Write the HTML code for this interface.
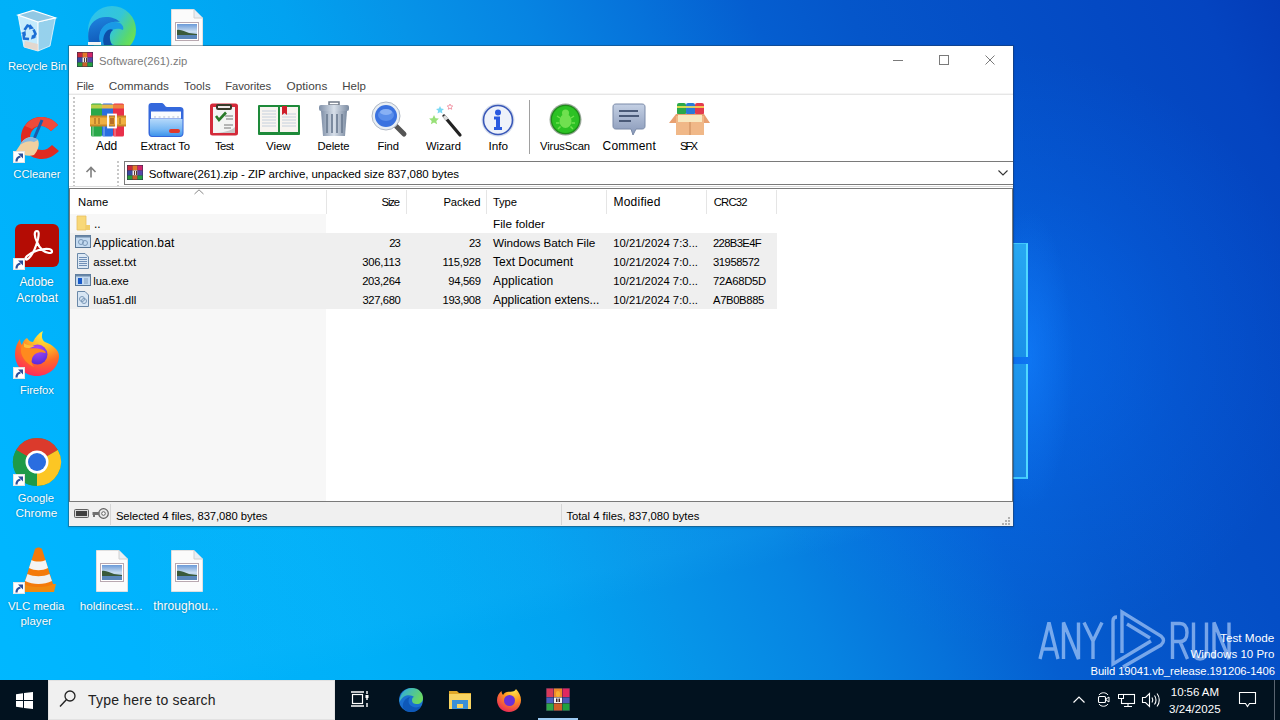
<!DOCTYPE html><html><head><meta charset="utf-8"><style>
*{margin:0;padding:0;box-sizing:border-box}
html,body{width:1280px;height:720px;overflow:hidden}
body{position:relative;font-family:"Liberation Sans",sans-serif;background:#0a6fd8}
.t{position:absolute;white-space:nowrap;font-family:"Liberation Sans",sans-serif}
.a{position:absolute}
svg{position:absolute;overflow:visible}
</style></head><body><div class="a" style="left:0;top:0;width:1280px;height:720px;background:linear-gradient(65deg,#00b8ff 0%,#00b4ff 10%,#00b2fa 17%,#00b0f8 24%,#00aaf4 31%,#02a2f0 38%,#0694e8 45%,#0684e2 53%,#0672da 60%,#055ed0 67%,#0556ca 73%,#044ec6 82%,#0444c0 95%,#043cb8 100%)"></div><div class="a" style="left:0;top:0;width:1280px;height:720px;background:radial-gradient(ellipse 300px 300px at 1015px 350px,rgba(10,120,255,0.5),rgba(10,120,255,0.18) 55%,rgba(10,120,255,0) 100%)"></div><div class="a" style="left:0;top:0;width:1280px;height:720px;background:radial-gradient(ellipse 45px 150px at 1028px 360px,rgba(20,130,255,0.55),rgba(20,130,255,0) 100%)"></div><div class="a" style="left:150px;top:400px;width:720px;height:300px;background:linear-gradient(166.6deg,rgba(40,190,255,0.11) 0%,rgba(40,190,255,0.11) 59%,rgba(40,190,255,0) 66%)"></div><div class="a" style="left:1013px;top:243px;width:15px;height:114px;background:linear-gradient(#28a8f2,#1a90e8);border-right:2px solid #50d8ff;border-top:1px solid #40c8fc"></div><div class="a" style="left:1013px;top:364px;width:15px;height:115px;background:linear-gradient(#1e98ee,#1a86e4);border-right:2px solid #50d8ff;border-bottom:2px solid #40c8fc"></div><svg style="left:0px;top:0px" width="70" height="60" viewBox="0 0 70 60" ><path d="M18 15 L38 22 L38 51 L24 47 Z" fill="rgba(240,248,252,0.82)" stroke="rgba(255,255,255,0.95)" stroke-width="0.8"/><path d="M38 22 L55.5 17.8 L50 46 L38 51 Z" fill="rgba(200,220,232,0.75)" stroke="rgba(255,255,255,0.9)" stroke-width="0.8"/><path d="M18 15 L33 10.5 L55.5 17.8 L38 22 Z" fill="rgba(170,205,225,0.85)" stroke="rgba(255,255,255,1)" stroke-width="1.2"/><path d="M25 41 L38 44 L38 51 L24 47Z" fill="rgba(250,200,170,0.55)"/><g fill="none" stroke="#1c6ed4" stroke-width="2.6"><path d="M24.5 30 L27.5 25.5 L31 27"/><path d="M33.5 29.5 L35.5 34 L33 38"/><path d="M29 39 L24 38.5 L23.5 34"/></g><g fill="#1c6ed4"><path d="M30 24 L34 28.5 L29 29.5Z"/><path d="M36.5 37 L31 39.5 L32 35Z"/><path d="M21 33 L25.5 31 L26 36Z"/></g></svg><svg style="left:88px;top:6px" width="49" height="39" viewBox="0 0 49 39" ><defs><linearGradient id="edg1" x1="0" y1="0.2" x2="1" y2="0.8"><stop offset="0" stop-color="#2ec2ec"/><stop offset="0.5" stop-color="#34c6d8"/><stop offset="0.78" stop-color="#58d870"/><stop offset="1" stop-color="#78e640"/></linearGradient><linearGradient id="edg2" x1="0" y1="0" x2="0.3" y2="1"><stop offset="0" stop-color="#1e86e0"/><stop offset="1" stop-color="#1058b8"/></linearGradient></defs><circle cx="24" cy="24" r="24" fill="url(#edg1)"/><path d="M0.3 27 C1 17 9 11 18 11 C24 11 29 13 32 16 C26 15 18 17 14 23 C11 28 11 34 13 39 L1.5 39 C0.5 35 0 31 0.3 27Z" fill="url(#edg2)"/><path d="M13 39 C10 32 11 25 16 20 C20 16 27 15 32 17 C35 19 36 22 35 24 C31 22 25 22 22 26 C19 30 20 36 26 39Z" fill="#1a9ae6"/><path d="M16 39 C14 33 16 27 20 24 C22 23 24 23 25 24 C21 27 21 33 24 39Z" fill="#0d4fa8"/><rect x="0" y="36" width="13" height="3" fill="#f4f4f4"/></svg><svg style="left:171px;top:9px" width="32" height="42" viewBox="0 0 32 42" ><path d="M0.5 0.5H23L31.5 9V41.5H0.5Z" fill="#fbfbfb" stroke="#e0e0e0"/><path d="M23 0.5V9H31.5" fill="#e8eef4" stroke="#d0d0d0"/><rect x="4.5" y="13.5" width="23" height="18" fill="#fff" stroke="#b8a8b0"/><defs><linearGradient id="skyg" x1="0" y1="0" x2="0" y2="1"><stop offset="0" stop-color="#6a9ad8"/><stop offset="0.5" stop-color="#c8dcf0"/><stop offset="1" stop-color="#90b8d8"/></linearGradient></defs><rect x="6" y="15" width="20" height="15" fill="url(#skyg)"/><path d="M6 21 C10 20 14 23 18 24 L26 25 V27 H6Z" fill="#3a5a3a"/><rect x="6" y="26" width="20" height="4" fill="#5a86b8"/></svg><svg style="left:12px;top:115px" width="50" height="48" viewBox="0 0 50 48" ><path d="M46 10 C41 4 35 2 29 2 C17 2 9 12 9 23 C9 35 18 44 30 44 C36 44 42 41 47 36 L40 30 C37 33 34 35 30 35 C23 35 18 30 18 23 C18 16 23 11 29 11 C33 11 36 13 39 16 Z" fill="#e02a20"/><path d="M46 10 C41 4 35 2 29 2 C22 2 16 6 13 11 L20 14 C22 12 25 11 29 11 C33 11 36 13 39 16Z" fill="#f04a3a"/><path d="M30 5 L22 24" stroke="#1e5aa8" stroke-width="3"/><path d="M8 30 C12 22 20 20 26 25 C28 29 26 36 22 40 C17 42 10 40 4 36 Z" fill="#f0d0a0"/><path d="M8 30 C12 22 20 20 26 25 L22 27 C18 25 12 27 8 30Z" fill="#88b8e0"/></svg><svg style="left:13px;top:151px" width="12" height="12" viewBox="0 0 12 12" ><rect x="0.5" y="0.5" width="11" height="11" fill="#fff" stroke="#e4e4e4"/><path d="M3.5 10.5 C3.5 7.5 5 6 7.5 5.5" stroke="#2c4f9a" stroke-width="2.2" fill="none"/><path d="M5 2.5 H10 V7.5Z" fill="#2c4f9a"/></svg><svg style="left:15px;top:224px" width="44" height="43" viewBox="0 0 44 43" ><rect x="0" y="0" width="44" height="43" rx="6" fill="#b40c04"/><path d="M22 7 C19 7 19 12 22 18 C24 23 28 28 34 29 C38 29 38 26 34 25 C28 24 18 27 12 32 C9 35 11 37 14 34 C18 30 21 23 23 15 C24 10 24 7 22 7Z" fill="none" stroke="#fff" stroke-width="2.2"/></svg><svg style="left:13px;top:258px" width="12" height="12" viewBox="0 0 12 12" ><rect x="0.5" y="0.5" width="11" height="11" fill="#fff" stroke="#e4e4e4"/><path d="M3.5 10.5 C3.5 7.5 5 6 7.5 5.5" stroke="#2c4f9a" stroke-width="2.2" fill="none"/><path d="M5 2.5 H10 V7.5Z" fill="#2c4f9a"/></svg><svg style="left:14px;top:331px" width="46" height="46" viewBox="0 0 46 46" ><defs><radialGradient id="ffg" cx="0.65" cy="0.05" r="1.05"><stop offset="0" stop-color="#fff04a"/><stop offset="0.3" stop-color="#ffbe2a"/><stop offset="0.6" stop-color="#ff6a28"/><stop offset="0.85" stop-color="#ff3a50"/><stop offset="1" stop-color="#f0206a"/></radialGradient><radialGradient id="ffp" cx="0.5" cy="0.2" r="0.8"><stop offset="0" stop-color="#b848f0"/><stop offset="0.6" stop-color="#7a3ae8"/><stop offset="1" stop-color="#5a2ad8"/></radialGradient></defs><path d="M23 45 C10 45 1 35 1 23 C1 17 3 12 6 8 C6 11 7 13 8 14 C9 10 11 8 13 7 C15 10 17 11 19 11 C21 6 25 2 29 0 C27 5 28 9 31 11 C39 14 45 19 45 25 C45 36 35 45 23 45Z" fill="url(#ffg)"/><circle cx="23.5" cy="23.5" r="10" fill="url(#ffp)"/><path d="M8 14 C12 19 18 16 26 18 C31 19 33 22 31 22 C25 20 19 23 18 28 C17 31 18 34 20 36 C13 33 8 27 7 21 C7 18 7 16 8 14Z" fill="#ff8a1e"/><path d="M10 12 C13 15 17 14 21 15 C17 17 13 18 10 16Z" fill="#ffc03a"/></svg><svg style="left:13px;top:367px" width="12" height="12" viewBox="0 0 12 12" ><rect x="0.5" y="0.5" width="11" height="11" fill="#fff" stroke="#e4e4e4"/><path d="M3.5 10.5 C3.5 7.5 5 6 7.5 5.5" stroke="#2c4f9a" stroke-width="2.2" fill="none"/><path d="M5 2.5 H10 V7.5Z" fill="#2c4f9a"/></svg><svg style="left:13px;top:438px" width="48" height="48" viewBox="0 0 48 48" ><circle cx="24" cy="24" r="24" fill="#1a9a4a"/><path d="M24 24 L3.2 12 A24 24 0 0 1 44.8 12 Z" fill="#db3a2c"/><path d="M24 24 L44.8 12 A24 24 0 0 1 24 48 Z" fill="#fcc624"/><path d="M24 24 L24 48 A24 24 0 0 1 3.2 12 Z" fill="#1e9a48"/><circle cx="24" cy="24" r="11.5" fill="#fff"/><circle cx="24" cy="24" r="9" fill="#2a6de0"/></svg><svg style="left:13px;top:474px" width="12" height="12" viewBox="0 0 12 12" ><rect x="0.5" y="0.5" width="11" height="11" fill="#fff" stroke="#e4e4e4"/><path d="M3.5 10.5 C3.5 7.5 5 6 7.5 5.5" stroke="#2c4f9a" stroke-width="2.2" fill="none"/><path d="M5 2.5 H10 V7.5Z" fill="#2c4f9a"/></svg><svg style="left:20px;top:547px" width="37" height="46" viewBox="0 0 37 46" ><path d="M1 37 L36 37 L34 45 L3 45Z" fill="#f08a10"/><path d="M15 2 C17 0 20 0 22 2 L33 37 C28 41 9 41 4 37Z" fill="#f47a0a"/><path d="M11.5 13 C15 15 22 15 25.5 13 L28 21 C22 24 15 24 9 21Z" fill="#f4f4f4"/><path d="M7.5 27 C14 30 23 30 29.5 27 L32 34 C24 38 13 38 5 34Z" fill="#f0f0f0"/></svg><svg style="left:13px;top:582px" width="12" height="12" viewBox="0 0 12 12" ><rect x="0.5" y="0.5" width="11" height="11" fill="#fff" stroke="#e4e4e4"/><path d="M3.5 10.5 C3.5 7.5 5 6 7.5 5.5" stroke="#2c4f9a" stroke-width="2.2" fill="none"/><path d="M5 2.5 H10 V7.5Z" fill="#2c4f9a"/></svg><svg style="left:96px;top:550px" width="32" height="42" viewBox="0 0 32 42" ><path d="M0.5 0.5H23L31.5 9V41.5H0.5Z" fill="#fbfbfb" stroke="#e0e0e0"/><path d="M23 0.5V9H31.5" fill="#e8eef4" stroke="#d0d0d0"/><rect x="4.5" y="13.5" width="23" height="18" fill="#fff" stroke="#b8a8b0"/><defs><linearGradient id="skyg" x1="0" y1="0" x2="0" y2="1"><stop offset="0" stop-color="#6a9ad8"/><stop offset="0.5" stop-color="#c8dcf0"/><stop offset="1" stop-color="#90b8d8"/></linearGradient></defs><rect x="6" y="15" width="20" height="15" fill="url(#skyg)"/><path d="M6 21 C10 20 14 23 18 24 L26 25 V27 H6Z" fill="#3a5a3a"/><rect x="6" y="26" width="20" height="4" fill="#5a86b8"/></svg><svg style="left:171px;top:550px" width="32" height="42" viewBox="0 0 32 42" ><path d="M0.5 0.5H23L31.5 9V41.5H0.5Z" fill="#fbfbfb" stroke="#e0e0e0"/><path d="M23 0.5V9H31.5" fill="#e8eef4" stroke="#d0d0d0"/><rect x="4.5" y="13.5" width="23" height="18" fill="#fff" stroke="#b8a8b0"/><defs><linearGradient id="skyg" x1="0" y1="0" x2="0" y2="1"><stop offset="0" stop-color="#6a9ad8"/><stop offset="0.5" stop-color="#c8dcf0"/><stop offset="1" stop-color="#90b8d8"/></linearGradient></defs><rect x="6" y="15" width="20" height="15" fill="url(#skyg)"/><path d="M6 21 C10 20 14 23 18 24 L26 25 V27 H6Z" fill="#3a5a3a"/><rect x="6" y="26" width="20" height="4" fill="#5a86b8"/></svg><span class="t" style="left:8.00px;top:59px;font-size:11.25px;line-height:14px;letter-spacing:-0.070px;color:#ffffff;text-shadow:0 0 2px rgba(0,0,0,0.35);">Recycle Bin</span><span class="t" style="left:13.30px;top:167px;font-size:11.25px;line-height:14px;letter-spacing:-0.043px;color:#ffffff;text-shadow:0 0 2px rgba(0,0,0,0.35);">CCleaner</span><span class="t" style="left:19.40px;top:275px;font-size:12.0px;line-height:14px;letter-spacing:-0.075px;color:#ffffff;text-shadow:0 0 2px rgba(0,0,0,0.35);">Adobe</span><span class="t" style="left:16.30px;top:290.5px;font-size:12px;line-height:14px;letter-spacing:0.058px;color:#ffffff;text-shadow:0 0 2px rgba(0,0,0,0.35);">Acrobat</span><span class="t" style="left:20.00px;top:382.5px;font-size:11.25px;line-height:14px;letter-spacing:-0.083px;color:#ffffff;text-shadow:0 0 2px rgba(0,0,0,0.35);">Firefox</span><span class="t" style="left:17.80px;top:490.5px;font-size:11.25px;line-height:14px;letter-spacing:-0.020px;color:#ffffff;text-shadow:0 0 2px rgba(0,0,0,0.35);">Google</span><span class="t" style="left:15.60px;top:506px;font-size:11.75px;line-height:14px;letter-spacing:0.000px;color:#ffffff;text-shadow:0 0 2px rgba(0,0,0,0.35);">Chrome</span><span class="t" style="left:8.00px;top:598.5px;font-size:11.5px;line-height:14px;letter-spacing:-0.062px;color:#ffffff;text-shadow:0 0 2px rgba(0,0,0,0.35);">VLC media</span><span class="t" style="left:20.40px;top:614px;font-size:11.5px;line-height:14px;letter-spacing:0.040px;color:#ffffff;text-shadow:0 0 2px rgba(0,0,0,0.35);">player</span><span class="t" style="left:79.70px;top:598.5px;font-size:11.75px;line-height:14px;letter-spacing:0.000px;color:#ffffff;text-shadow:0 0 2px rgba(0,0,0,0.35);">holdincest...</span><span class="t" style="left:153.30px;top:598.5px;font-size:12px;line-height:14px;letter-spacing:0.059px;color:#ffffff;text-shadow:0 0 2px rgba(0,0,0,0.35);">throughou...</span><div class="a" style="left:68px;top:45px;width:946px;height:482px;border:1px solid rgba(40,50,60,0.36);background:#fff;background-clip:padding-box;box-shadow:0 1px 2px rgba(0,0,0,0.1)"></div><svg style="left:77px;top:52px" width="16" height="15" viewBox="0 0 16 15" ><rect x="0" y="0" width="16" height="15" fill="#2a2a4a"/><rect x="0.5" y="0.5" width="5" height="5" fill="#c8283c"/><rect x="5.5" y="0.5" width="5" height="5" fill="#e4782a"/><rect x="10.5" y="0.5" width="5" height="5" fill="#d0246a"/><rect x="0.5" y="5.5" width="5" height="5" fill="#3a4aa0"/><rect x="5.5" y="5.5" width="5" height="5" fill="#f4f0f0"/><rect x="10.5" y="5.5" width="5" height="5" fill="#5646a8"/><rect x="0.5" y="10.5" width="5" height="4" fill="#2a9a3a"/><rect x="5.5" y="10.5" width="5" height="4" fill="#c8602a"/><rect x="10.5" y="10.5" width="5" height="4" fill="#22a040"/><rect x="7" y="6" width="1" height="4" fill="#5a3a2a"/><rect x="9" y="6" width="1" height="4" fill="#5a3a2a"/></svg><span class="t" style="left:99.00px;top:54px;font-size:11.25px;line-height:14px;letter-spacing:0.009px;color:#7a7a7a;">Software(261).zip</span><div class="a" style="left:893px;top:60px;width:10px;height:1px;background:#7a7a7a"></div><div class="a" style="left:939px;top:55px;width:10px;height:10px;border:1px solid #7a7a7a"></div><svg style="left:985px;top:55px" width="10" height="10"><path d="M0.5 0.5L9.5 9.5M9.5 0.5L0.5 9.5" stroke="#7a7a7a" stroke-width="1"/></svg><span class="t" style="left:76.50px;top:79px;font-size:11.25px;line-height:14px;letter-spacing:-0.217px;color:#444;">File</span><span class="t" style="left:108.75px;top:79px;font-size:11.75px;line-height:14px;letter-spacing:0.021px;color:#444;">Commands</span><span class="t" style="left:184.00px;top:79px;font-size:11.25px;line-height:14px;letter-spacing:0.062px;color:#444;">Tools</span><span class="t" style="left:225.30px;top:79px;font-size:11.25px;line-height:14px;letter-spacing:-0.069px;color:#444;">Favorites</span><span class="t" style="left:286.50px;top:79px;font-size:11.75px;line-height:14px;letter-spacing:0.050px;color:#444;">Options</span><span class="t" style="left:342.30px;top:79px;font-size:11.5px;line-height:14px;letter-spacing:0.017px;color:#444;">Help</span><div class="a" style="left:69px;top:93px;width:944px;height:1px;background:#f5f5f5"></div><div class="a" style="left:69px;top:94px;width:944px;height:1px;background:#e6e6e6"></div><div class="a" style="left:73px;top:97px;width:2px;height:90px;background:repeating-linear-gradient(#c8c8c8 0 2px,transparent 2px 4px)"></div><div class="a" style="left:117px;top:161px;width:2px;height:26px;background:repeating-linear-gradient(#c8c8c8 0 2px,transparent 2px 4px)"></div><svg style="left:90px;top:102px" width="36" height="36" viewBox="0 0 36 36" ><rect x="1" y="1.5" width="11" height="33" rx="1.5" fill="#2aa84a"/><rect x="12" y="1.5" width="11" height="33" rx="1.5" fill="#2a6ee0"/><rect x="23" y="1.5" width="11" height="33" rx="1.5" fill="#e8304a"/><rect x="1" y="2.5" width="11" height="4" fill="#b8d048"/><rect x="12" y="2.5" width="11" height="4" fill="#e8b848"/><rect x="23" y="2.5" width="11" height="4" fill="#f08040"/><rect x="2" y="18" width="2" height="16" fill="rgba(255,255,255,0.25)"/><rect x="13" y="18" width="2" height="16" fill="rgba(255,255,255,0.25)"/><rect x="24" y="18" width="2" height="16" fill="rgba(255,255,255,0.25)"/><rect x="0" y="13.5" width="36" height="11" fill="#c88828"/><rect x="0" y="15.5" width="36" height="7" fill="#f0b040"/><path d="M5 16V22M9 16V22M30 16V22" stroke="#a86a20" stroke-width="1.2"/><rect x="18" y="12.5" width="8" height="13" fill="none" stroke="#fff" stroke-width="1.8"/><rect x="20" y="16" width="4" height="6" fill="#b87028"/></svg><svg style="left:147px;top:102px" width="38" height="36" viewBox="0 0 38 36" ><defs><linearGradient id="exg" x1="0" y1="0" x2="0" y2="1"><stop offset="0" stop-color="#b4d8fa"/><stop offset="0.6" stop-color="#78b8f4"/><stop offset="1" stop-color="#3e94ec"/></linearGradient></defs><path d="M1.5 4 C1.5 2 2.5 1 4.5 1 H15 C17 1 18 5 20 5 H33 C35 5 36.5 6 36.5 8 V31 C36.5 33.5 35 35 33 35 H5 C3 35 1.5 33.5 1.5 31Z" fill="#3468dc"/><rect x="4" y="9.5" width="30" height="7" fill="#fafcfe"/><path d="M7 15H32" stroke="#b8c0c8" stroke-width="1.2" stroke-dasharray="2 2.6"/><path d="M3 17 H35.5 V31 C35.5 33 34.5 34 32.5 34 H5.5 C3.5 34 3 33 3 31Z" fill="url(#exg)"/><rect x="22" y="27" width="11" height="4" rx="2" fill="#e0382a"/></svg><svg style="left:209px;top:103px" width="30" height="33" viewBox="0 0 30 33" ><rect x="1" y="0.5" width="28" height="32" rx="2.5" fill="#d42a3a"/><rect x="4" y="4" width="22" height="26" fill="#f4f4f4"/><path d="M4 30 H26 V24 C22 28 12 30 4 30Z" fill="#c8c8c8"/><rect x="7" y="1" width="16" height="6" rx="2" fill="#3a3a2a"/><rect x="9" y="3" width="12" height="2" fill="#f0e8e8"/><path d="M7 13 L10 17 L17 9.5" stroke="#2a7a2a" stroke-width="2.6" fill="none"/><path d="M16 13H24M17 16H24M15 22H24M15 25H22" stroke="#777" stroke-width="1"/></svg><svg style="left:257px;top:104px" width="44" height="32" viewBox="0 0 44 32" ><rect x="1" y="1" width="42" height="30" rx="1" fill="#1e8a3a"/><path d="M3 3 H21 V28 H3Z" fill="#f8f4f0"/><path d="M23 3 H41 V28 H23Z" fill="#f8f4f0"/><path d="M5 7H19M5 10H19M5 13H19M5 16H19M5 19H19M5 22H19M25 10H39M25 13H39M25 16H39M25 19H39M25 22H39" stroke="#b8c8d8" stroke-width="0.8"/><path d="M25 2 H30 V11 L27.5 9 L25 11Z" fill="#d01e2a"/></svg><svg style="left:318px;top:101px" width="32" height="36" viewBox="0 0 32 36" ><defs><linearGradient id="trg" x1="0" x2="1"><stop offset="0" stop-color="#8090a8"/><stop offset="0.5" stop-color="#d8e0ea"/><stop offset="1" stop-color="#7a8aa0"/></linearGradient></defs><rect x="11" y="1" width="10" height="3" fill="none" stroke="#707a88" stroke-width="1.5"/><rect x="1" y="4" width="30" height="6" rx="2" fill="url(#trg)"/><path d="M3 10 H29 L27 35 H5Z" fill="url(#trg)"/><path d="M9 13V32M14 13V32M19 13V32M24 13V32" stroke="#6a7a90" stroke-width="1.6"/></svg><svg style="left:369px;top:101px" width="38" height="36" viewBox="0 0 38 36" ><path d="M26 24 L35 33" stroke="#555" stroke-width="5" stroke-linecap="round"/><circle cx="17" cy="15" r="14" fill="#e8eef4" stroke="#b0b8c4" stroke-width="1"/><circle cx="17" cy="15" r="11" fill="#3a72e0"/><ellipse cx="17" cy="14" rx="8" ry="6" fill="#5a8eea"/><ellipse cx="17" cy="11" rx="6" ry="3" fill="#88b0f4"/></svg><svg style="left:426px;top:102px" width="38" height="36" viewBox="0 0 38 36" ><path d="M18 14 L34 33" stroke="#222" stroke-width="3.2" stroke-linecap="round"/><path d="M18 14 L21 17.5" stroke="#ddd" stroke-width="3.2"/><path d="M14 4 l1.2 2.6 2.8 0.3 -2.1 1.9 0.6 2.8 -2.5 -1.4 -2.5 1.4 0.6 -2.8 -2.1 -1.9 2.8 -0.3z" fill="#7ad8f4"/><path d="M24 2 l0.8 1.8 2 0.2 -1.5 1.3 0.4 2 -1.7 -1 -1.7 1 0.4 -2 -1.5 -1.3 2 -0.2z" fill="none" stroke="#f090a0" stroke-width="0.9"/><path d="M8 13 l1.5 3.2 3.4 0.4 -2.6 2.3 0.8 3.4 -3.1 -1.7 -3.1 1.7 0.8 -3.4 -2.6 -2.3 3.4 -0.4z" fill="#98e078"/></svg><svg style="left:481px;top:103px" width="34" height="34" viewBox="0 0 34 34" ><circle cx="17" cy="17" r="16.5" fill="#d4dcec"/><circle cx="17" cy="17" r="14.5" fill="#eef2fa" stroke="#3a58b8" stroke-width="1.6"/><circle cx="17" cy="9.5" r="3" fill="#2a5ae0"/><path d="M13 13.5H19V24H21V27H13V24H15V16.5H13Z" fill="#2a5ae0"/></svg><svg style="left:549px;top:103px" width="34" height="33" viewBox="0 0 34 33" ><circle cx="16.5" cy="16.5" r="16" fill="#9aa89a"/><circle cx="16.5" cy="16.5" r="14.8" fill="#1e8a1a"/><circle cx="16.5" cy="16.5" r="13.5" fill="#2cc224"/><ellipse cx="16.5" cy="18" rx="6" ry="7" fill="#70e050"/><circle cx="16.5" cy="10" r="3.5" fill="#70e050"/><path d="M8 13L11 15M25 13L22 15M7 20H10.5M26 20H22.5M9 26L11.5 23.5M24 26L21.5 23.5" stroke="#70e050" stroke-width="1.5"/></svg><svg style="left:612px;top:103px" width="34" height="33" viewBox="0 0 34 33" ><defs><linearGradient id="cmg" x1="0" y1="0" x2="0" y2="1"><stop offset="0" stop-color="#c4d0e4"/><stop offset="1" stop-color="#8898b8"/></linearGradient></defs><path d="M4 1 H30 C32 1 33 2 33 4 V23 C33 25 32 26 30 26 H24 L21 32 L19 26 H4 C2 26 1 25 1 23 V4 C1 2 2 1 4 1Z" fill="url(#cmg)" stroke="#7a8aa8" stroke-width="1"/><path d="M7 8H26M7 13H27M7 18H19" stroke="#4a5a78" stroke-width="1.8"/></svg><svg style="left:669px;top:102px" width="42" height="34" viewBox="0 0 42 34" ><rect x="8" y="1" width="9" height="12" rx="2" fill="#2aa84a"/><rect x="17" y="1" width="9" height="12" rx="2" fill="#2a7ad8"/><rect x="26" y="1" width="9" height="12" rx="2" fill="#e23a4e"/><rect x="8" y="4" width="27" height="2" fill="rgba(255,230,80,0.8)"/><path d="M7 12 H35 V33 H7Z" fill="#f0b888"/><path d="M0 21 L7 12 H35 L41 21 H35 L35 14 H7 V21Z" fill="#e8a070"/><rect x="9" y="13" width="24" height="7" fill="#f8e8c0"/><path d="M21 20V33" stroke="#c88858" stroke-width="1"/></svg><span class="t" style="left:96.00px;top:138.5px;font-size:12.0px;line-height:14px;letter-spacing:-0.050px;color:#000;">Add</span><span class="t" style="left:140.50px;top:138.5px;font-size:11.25px;line-height:14px;letter-spacing:-0.033px;color:#000;">Extract To</span><span class="t" style="left:215.00px;top:138.5px;font-size:11.25px;line-height:14px;letter-spacing:-0.617px;color:#000;">Test</span><span class="t" style="left:266.00px;top:138.5px;font-size:11.5px;line-height:14px;letter-spacing:-0.050px;color:#000;">View</span><span class="t" style="left:317.50px;top:138.5px;font-size:11.25px;line-height:14px;letter-spacing:-0.120px;color:#000;">Delete</span><span class="t" style="left:377.50px;top:138.5px;font-size:11.25px;line-height:14px;letter-spacing:-0.133px;color:#000;">Find</span><span class="t" style="left:426.00px;top:138.5px;font-size:11.25px;line-height:14px;letter-spacing:0.000px;color:#000;">Wizard</span><span class="t" style="left:488.50px;top:138.5px;font-size:11.75px;line-height:14px;letter-spacing:-0.033px;color:#000;">Info</span><span class="t" style="left:540.00px;top:138.5px;font-size:11.25px;line-height:14px;letter-spacing:-0.131px;color:#000;">VirusScan</span><span class="t" style="left:602.60px;top:138.5px;font-size:12px;line-height:14px;letter-spacing:0.200px;color:#000;">Comment</span><span class="t" style="left:680.00px;top:138.5px;font-size:11.25px;line-height:14px;letter-spacing:-1.950px;color:#000;">SFX</span><div class="a" style="left:529px;top:100px;width:1px;height:54px;background:#a0a0a0"></div><svg style="left:84px;top:166px" width="14" height="12"><path d="M7 1.5V11.5M2.5 6L7 1.5L11.5 6" stroke="#808080" stroke-width="1.6" fill="none"/></svg><div class="a" style="left:124px;top:161px;width:889px;height:24px;border:1px solid #7a7a7a;border-right:none;background:#fff"></div><svg style="left:127px;top:165px" width="16" height="15" viewBox="0 0 16 15" ><rect x="0" y="0" width="16" height="15" fill="#2a2a4a"/><rect x="0.5" y="0.5" width="5" height="5" fill="#c8283c"/><rect x="5.5" y="0.5" width="5" height="5" fill="#e4782a"/><rect x="10.5" y="0.5" width="5" height="5" fill="#d0246a"/><rect x="0.5" y="5.5" width="5" height="5" fill="#3a4aa0"/><rect x="5.5" y="5.5" width="5" height="5" fill="#f4f0f0"/><rect x="10.5" y="5.5" width="5" height="5" fill="#5646a8"/><rect x="0.5" y="10.5" width="5" height="4" fill="#2a9a3a"/><rect x="5.5" y="10.5" width="5" height="4" fill="#c8602a"/><rect x="10.5" y="10.5" width="5" height="4" fill="#22a040"/><rect x="7" y="6" width="1" height="4" fill="#5a3a2a"/><rect x="9" y="6" width="1" height="4" fill="#5a3a2a"/></svg><span class="t" style="left:148.70px;top:167px;font-size:11.5px;line-height:14px;letter-spacing:-0.057px;color:#000;">Software(261).zip - ZIP archive, unpacked size 837,080 bytes</span><svg style="left:998px;top:170px" width="10" height="6"><path d="M0.5 0.5L5 5L9.5 0.5" stroke="#333" stroke-width="1.1" fill="none"/></svg><div class="a" style="left:69px;top:186px;width:944px;height:1px;background:#dcdcdc"></div><div class="a" style="left:69px;top:188px;width:944px;height:314px;border:1px solid #7a7a7a"></div><div class="a" style="left:70px;top:214px;width:256px;height:287px;background:#f7f7f7"></div><div class="a" style="left:70px;top:233px;width:707px;height:76px;background:#efefef"></div><div class="a" style="left:326px;top:190px;width:1px;height:24px;background:#e5e5e5"></div><div class="a" style="left:406px;top:190px;width:1px;height:24px;background:#e5e5e5"></div><div class="a" style="left:486px;top:190px;width:1px;height:24px;background:#e5e5e5"></div><div class="a" style="left:606px;top:190px;width:1px;height:24px;background:#e5e5e5"></div><div class="a" style="left:706px;top:190px;width:1px;height:24px;background:#e5e5e5"></div><div class="a" style="left:776px;top:190px;width:1px;height:24px;background:#e5e5e5"></div><svg style="left:194px;top:189px" width="10" height="6"><path d="M0.5 5L5 0.8L9.5 5" stroke="#888" stroke-width="1" fill="none"/></svg><span class="t" style="left:78.00px;top:195px;font-size:11.25px;line-height:14px;letter-spacing:0.067px;color:#000;">Name</span><span class="t" style="left:381.60px;top:195px;font-size:11.25px;line-height:14px;letter-spacing:-1.167px;color:#000;">Size</span><span class="t" style="left:443.40px;top:195px;font-size:11.25px;line-height:14px;letter-spacing:-0.090px;color:#000;">Packed</span><span class="t" style="left:493.00px;top:195px;font-size:11.25px;line-height:14px;letter-spacing:-0.133px;color:#000;">Type</span><span class="t" style="left:613.50px;top:195px;font-size:12px;line-height:14px;letter-spacing:0.221px;color:#000;">Modified</span><span class="t" style="left:713.70px;top:195px;font-size:11.25px;line-height:14px;letter-spacing:-0.775px;color:#000;">CRC32</span><svg style="left:76px;top:215px" width="16" height="16" viewBox="0 0 16 16" ><path d="M1 1 H10 V15 H1Z" fill="#f8d878" stroke="#e8c060" stroke-width="0.8"/><path d="M10 10 H14 V15 H10" fill="#f0cc68"/></svg><svg style="left:75px;top:235px" width="16" height="13" viewBox="0 0 16 13" ><rect x="0.5" y="0.5" width="15" height="12" fill="#c4daf0" stroke="#5a7898"/><rect x="0.5" y="0.5" width="15" height="2" fill="#6a88a8"/><circle cx="6" cy="7" r="2.5" fill="none" stroke="#7a98b8" stroke-width="1"/><circle cx="10" cy="8" r="2.5" fill="none" stroke="#7a98b8" stroke-width="1"/></svg><svg style="left:77px;top:253px" width="12" height="16" viewBox="0 0 12 16" ><path d="M0.5 0.5H8L11.5 4V15.5H0.5Z" fill="#dce8f4" stroke="#6a88a8"/><path d="M2 4.5H10M2 6.5H10M2 8.5H10M2 10.5H10M2 12.5H10" stroke="#7090b8" stroke-width="1"/></svg><svg style="left:75px;top:274px" width="16" height="12" viewBox="0 0 16 12" ><rect x="0.5" y="0.5" width="15" height="11" fill="#c4daf0" stroke="#5a7898"/><rect x="0.5" y="0.5" width="15" height="2" fill="#6a88a8"/><rect x="3" y="4" width="4" height="6" fill="#1a5ac8"/><path d="M9 5H13M9 7H13M9 9H13" stroke="#7a98b8" stroke-width="0.9"/></svg><svg style="left:77px;top:291px" width="12" height="16" viewBox="0 0 12 16" ><path d="M0.5 0.5H8L11.5 4V15.5H0.5Z" fill="#d8e6f4" stroke="#6a88a8"/><circle cx="5" cy="8" r="2.5" fill="none" stroke="#7a98b8"/><circle cx="7" cy="10" r="2.5" fill="none" stroke="#7a98b8"/></svg><span class="t" style="left:94.00px;top:217px;font-size:12px;line-height:14px;letter-spacing:0.000px;color:#000;">..</span><span class="t" style="left:493.00px;top:217px;font-size:11.75px;line-height:14px;letter-spacing:0.040px;color:#000;">File folder</span><span class="t" style="left:93.30px;top:236px;font-size:12px;line-height:14px;letter-spacing:0.168px;color:#000;">Application.bat</span><span class="t" style="left:389.30px;top:236px;font-size:11.25px;line-height:14px;letter-spacing:-1.000px;color:#000;">23</span><span class="t" style="left:469.00px;top:236px;font-size:11.25px;line-height:14px;letter-spacing:-0.500px;color:#000;">23</span><span class="t" style="left:493.00px;top:236px;font-size:11.75px;line-height:14px;letter-spacing:-0.053px;color:#000;">Windows Batch File</span><span class="t" style="left:613.20px;top:236px;font-size:11.25px;line-height:14px;letter-spacing:0.022px;color:#000;">10/21/2024 7:3...</span><span class="t" style="left:713.00px;top:236px;font-size:11.25px;line-height:14px;letter-spacing:-0.636px;color:#000;">228B3E4F</span><span class="t" style="left:93.30px;top:255px;font-size:11.5px;line-height:14px;letter-spacing:0.000px;color:#000;">asset.txt</span><span class="t" style="left:362.20px;top:255px;font-size:11.25px;line-height:14px;letter-spacing:-0.208px;color:#000;">306,113</span><span class="t" style="left:442.50px;top:255px;font-size:11.25px;line-height:14px;letter-spacing:-0.225px;color:#000;">115,928</span><span class="t" style="left:493.00px;top:255px;font-size:12.0px;line-height:14px;letter-spacing:-0.004px;color:#000;">Text Document</span><span class="t" style="left:613.20px;top:255px;font-size:11.25px;line-height:14px;letter-spacing:0.022px;color:#000;">10/21/2024 7:0...</span><span class="t" style="left:713.00px;top:255px;font-size:11.25px;line-height:14px;letter-spacing:-0.464px;color:#000;">31958572</span><span class="t" style="left:93.30px;top:274px;font-size:11.25px;line-height:14px;letter-spacing:-0.117px;color:#000;">lua.exe</span><span class="t" style="left:362.20px;top:274px;font-size:11.25px;line-height:14px;letter-spacing:-0.342px;color:#000;">203,264</span><span class="t" style="left:448.30px;top:274px;font-size:11.25px;line-height:14px;letter-spacing:-0.340px;color:#000;">94,569</span><span class="t" style="left:493.00px;top:274px;font-size:12px;line-height:14px;letter-spacing:0.150px;color:#000;">Application</span><span class="t" style="left:613.20px;top:274px;font-size:11.25px;line-height:14px;letter-spacing:0.022px;color:#000;">10/21/2024 7:0...</span><span class="t" style="left:713.00px;top:274px;font-size:11.25px;line-height:14px;letter-spacing:-0.264px;color:#000;">72A68D5D</span><span class="t" style="left:93.30px;top:293px;font-size:11.5px;line-height:14px;letter-spacing:0.031px;color:#000;">lua51.dll</span><span class="t" style="left:362.50px;top:293px;font-size:11.25px;line-height:14px;letter-spacing:-0.392px;color:#000;">327,680</span><span class="t" style="left:442.50px;top:293px;font-size:11.25px;line-height:14px;letter-spacing:-0.358px;color:#000;">193,908</span><span class="t" style="left:493.00px;top:293px;font-size:12.0px;line-height:14px;letter-spacing:-0.055px;color:#000;">Application extens...</span><span class="t" style="left:613.20px;top:293px;font-size:11.25px;line-height:14px;letter-spacing:0.022px;color:#000;">10/21/2024 7:0...</span><span class="t" style="left:713.00px;top:293px;font-size:11.25px;line-height:14px;letter-spacing:-0.357px;color:#000;">A7B0B885</span><div class="a" style="left:69px;top:502px;width:944px;height:24px;background:#f0f0f0"></div><div class="a" style="left:110px;top:504px;width:1px;height:21px;background:#d6d6d6"></div><div class="a" style="left:561px;top:504px;width:1px;height:21px;background:#d6d6d6"></div><svg style="left:74px;top:509px" width="15" height="9" viewBox="0 0 15 9" ><rect x="0.5" y="0.5" width="14" height="8" rx="1" fill="#d8d8d8" stroke="#606060"/><rect x="2" y="2" width="11" height="5" fill="#404040"/></svg><svg style="left:92px;top:508px" width="17" height="11" viewBox="0 0 17 11" ><circle cx="11.5" cy="5.5" r="4.8" fill="#e8e8e8" stroke="#606060" stroke-width="1.2"/><circle cx="11.5" cy="5.5" r="1.8" fill="#fff" stroke="#606060"/><rect x="0.5" y="4" width="7" height="3" fill="#707070"/><rect x="1" y="6" width="2" height="3" fill="#707070"/></svg><span class="t" style="left:115.90px;top:508.5px;font-size:11.25px;line-height:14px;letter-spacing:-0.055px;color:#000;">Selected 4 files, 837,080 bytes</span><span class="t" style="left:566.40px;top:508.5px;font-size:11.25px;line-height:14px;letter-spacing:-0.011px;color:#000;">Total 4 files, 837,080 bytes</span><svg style="left:1002px;top:515px" width="10" height="10"><g fill="#b0b0b0"><rect x="6" y="2" width="2" height="2"/><rect x="3" y="5" width="2" height="2"/><rect x="6" y="5" width="2" height="2"/><rect x="0" y="8" width="2" height="2"/><rect x="3" y="8" width="2" height="2"/><rect x="6" y="8" width="2" height="2"/></g></svg><svg style="left:0;top:0" width="1280" height="720"><path d="M1040,659 L1049,622.5 L1058,659 M1043.5,649 H1054.5 M1063.5,659 V622.5 L1078.5,659 V622.5 M1084,622.5 L1093,641 L1102,622.5 M1093,641 V659 M1172.5,659 V623.5 H1180 Q1187,623.5 1187,632.5 Q1187,641.5 1180,641.5 H1172.5 M1180,641.5 L1187.5,659 M1193.5,622.5 V650 Q1193.5,659 1200,659 Q1206.5,659 1206.5,650 V622.5 M1214,659 V622.5 L1229,659 V622.5 M1117,617 Q1113,617 1113,621 V664 L1151,641 M1122,653 V612 L1161,636 Q1166,640.5 1161,645 L1123,667 M1127,624 L1150,638" fill="none" stroke="rgba(195,220,255,0.6)" stroke-width="3.4"/></svg><span class="t" style="left:1220.00px;top:631px;font-size:11.75px;line-height:14px;letter-spacing:0.012px;color:#fff;">Test Mode</span><span class="t" style="left:1190.50px;top:647px;font-size:11.5px;line-height:14px;letter-spacing:0.004px;color:#fff;">Windows 10 Pro</span><span class="t" style="left:1090.50px;top:664px;font-size:11.25px;line-height:14px;letter-spacing:-0.077px;color:#fff;">Build 19041.vb_release.191206-1406</span><div class="a" style="left:0;top:680px;width:1280px;height:40px;background:#02121f"></div><div class="a" style="left:48px;top:680px;width:287px;height:40px;background:#f0f0f0;border:1px solid #e2e2e2"></div><svg style="left:16px;top:692px" width="17" height="17" viewBox="0 0 17 17" ><path d="M0 2.3 L7 1.3 V8 H0Z M8 1.1 L17 0 V8 H8Z M0 9 H7 V15.7 L0 14.7Z M8 9 H17 V17 L8 15.9Z" fill="#fff"/></svg><svg style="left:59px;top:690px" width="17" height="18" viewBox="0 0 17 18" ><circle cx="11" cy="6" r="5" fill="none" stroke="#222" stroke-width="1.3"/><path d="M7.3 9.8 L1 16.5" stroke="#222" stroke-width="1.4"/></svg><svg style="left:351px;top:691px" width="18" height="16" viewBox="0 0 18 16" ><rect x="1.5" y="3.5" width="10" height="9" fill="none" stroke="#fff" stroke-width="1.2"/><path d="M0 1H13M0 15H13M16 0V3M16 6V9M16 12V16" stroke="#fff" stroke-width="1.4"/><rect x="14.5" y="4" width="3" height="3" fill="#fff"/></svg><svg style="left:399px;top:688px" width="24" height="24" viewBox="0 0 24 24" ><defs><linearGradient id="tbe" x1="0" y1="0" x2="1" y2="0.5"><stop offset="0" stop-color="#2aa8e8"/><stop offset="1" stop-color="#6ad860"/></linearGradient></defs><circle cx="12" cy="12" r="12" fill="#1a70d0"/><path d="M0.5 14 C0.5 6 6 0 13 0 C20 0 24 5 24 10 C24 14 21 16 18 16 C15 16 13 15 13 12 C13 10 14 9 15 9 C12 6 4 6 0.5 14Z" fill="url(#tbe)"/><path d="M4 20 C6 23 10 24 13 24 C17 24 21 21 22 18 C19 20 14 20 11 17 C9 15 9 11 11 9 C6 10 3 15 4 20Z" fill="#0e58b8"/></svg><svg style="left:449px;top:691px" width="22" height="18" viewBox="0 0 22 18" ><path d="M0 0 H8 L10 2 H22 V18 H0Z" fill="#e0a828"/><rect x="0" y="3" width="22" height="15" fill="#f8d462"/><rect x="3" y="9" width="16" height="9" fill="#3a8fd8"/><rect x="8" y="13" width="6" height="4" fill="#f8d462"/></svg><svg style="left:497px;top:688px" width="24" height="24" viewBox="0 0 24 24" ><defs><radialGradient id="tbf" cx="0.7" cy="0.1" r="1"><stop offset="0" stop-color="#ffe04a"/><stop offset="0.4" stop-color="#ff9a1e"/><stop offset="1" stop-color="#e8205a"/></radialGradient></defs><path d="M12 24 C5 24 0 18.5 0 12 C0 8 2 5 4.5 3 C4.5 5 5.5 6 6 7 C7 5 9 4 10 4 C14 3 17 5 19 1 C22 4 24 8 24 12 C24 18.5 19 24 12 24Z" fill="url(#tbf)"/><circle cx="12.5" cy="12.5" r="5.5" fill="#6a30d8"/></svg><svg style="left:546px;top:688px" width="24" height="23" viewBox="0 0 24 23" ><rect x="0" y="0" width="24" height="23" fill="#28284a"/><rect x="0.5" y="0.5" width="7" height="8.5" fill="#d83a5a"/><rect x="8" y="0.5" width="8" height="8.5" fill="#f08a28"/><rect x="16.5" y="0.5" width="7" height="8.5" fill="#e02860"/><rect x="0.5" y="9.5" width="7" height="5.5" fill="#4a60c0"/><rect x="8" y="9.5" width="8" height="5.5" fill="#f4f0f0"/><rect x="16.5" y="9.5" width="7" height="5.5" fill="#4a58b8"/><rect x="0.5" y="15.5" width="7" height="7" fill="#30a848"/><rect x="8" y="15.5" width="8" height="7" fill="#d06028"/><rect x="16.5" y="15.5" width="7" height="7" fill="#20a040"/><rect x="10" y="3" width="4" height="6" rx="2" fill="#f8b030"/><rect x="10" y="10.5" width="1.5" height="3.5" fill="#402020"/><rect x="12.5" y="10.5" width="1.5" height="3.5" fill="#402020"/></svg><div class="a" style="left:538px;top:718px;width:40px;height:2px;background:#9ccaf2"></div><svg style="left:1073px;top:696px" width="12" height="7" viewBox="0 0 12 7" ><path d="M0.5 6.5 L6 1 L11.5 6.5" stroke="#fff" stroke-width="1.2" fill="none"/></svg><svg style="left:1097px;top:691px" width="13" height="17" viewBox="0 0 13 17" ><path d="M2 4 C4 1 9 1 11 4 M2 13 C4 16 9 16 11 13" stroke="#fff" stroke-width="1" fill="none"/><rect x="1.5" y="5.5" width="7" height="6" rx="1" fill="none" stroke="#fff" stroke-width="1.1"/><path d="M9 8 L12 6 V11 L9 9Z" fill="none" stroke="#fff" stroke-width="1"/></svg><svg style="left:1118px;top:694px" width="17" height="13" viewBox="0 0 17 13" ><rect x="3.5" y="0.5" width="13" height="9" fill="none" stroke="#fff" stroke-width="1.1"/><path d="M10 10V12.5M6 12.5H14" stroke="#fff" stroke-width="1.1"/><rect x="0.5" y="0.5" width="5" height="4" fill="#02121f" stroke="#fff"/></svg><svg style="left:1142px;top:693px" width="18" height="14" viewBox="0 0 18 14" ><path d="M0.5 4.5H3.5L7.5 0.5V13.5L3.5 9.5H0.5Z" fill="none" stroke="#fff" stroke-width="1.1"/><path d="M10 4.5C11 6 11 8 10 9.5M12.5 2.5C14.5 5 14.5 9 12.5 11.5M15 0.5C18 4 18 10 15 13.5" stroke="#fff" stroke-width="1.1" fill="none"/></svg><svg style="left:1239px;top:692px" width="17" height="16" viewBox="0 0 17 16" ><path d="M0.5 0.5H16.5V11.5H10.5L8.5 14.5L6.5 11.5H0.5Z" fill="none" stroke="#fff" stroke-width="1.1"/></svg><div class="a" style="left:1274px;top:680px;width:1px;height:40px;background:#5a6470"></div><span class="t" style="left:88.10px;top:693.3px;font-size:14px;line-height:14px;letter-spacing:0.208px;color:#222;">Type here to search</span><span class="t" style="left:1170.80px;top:684.5px;font-size:11.5px;line-height:14px;letter-spacing:-0.057px;color:#fff;">10:56 AM</span><span class="t" style="left:1169.00px;top:701.5px;font-size:11.5px;line-height:14px;letter-spacing:0.056px;color:#fff;">3/24/2025</span></body></html>
